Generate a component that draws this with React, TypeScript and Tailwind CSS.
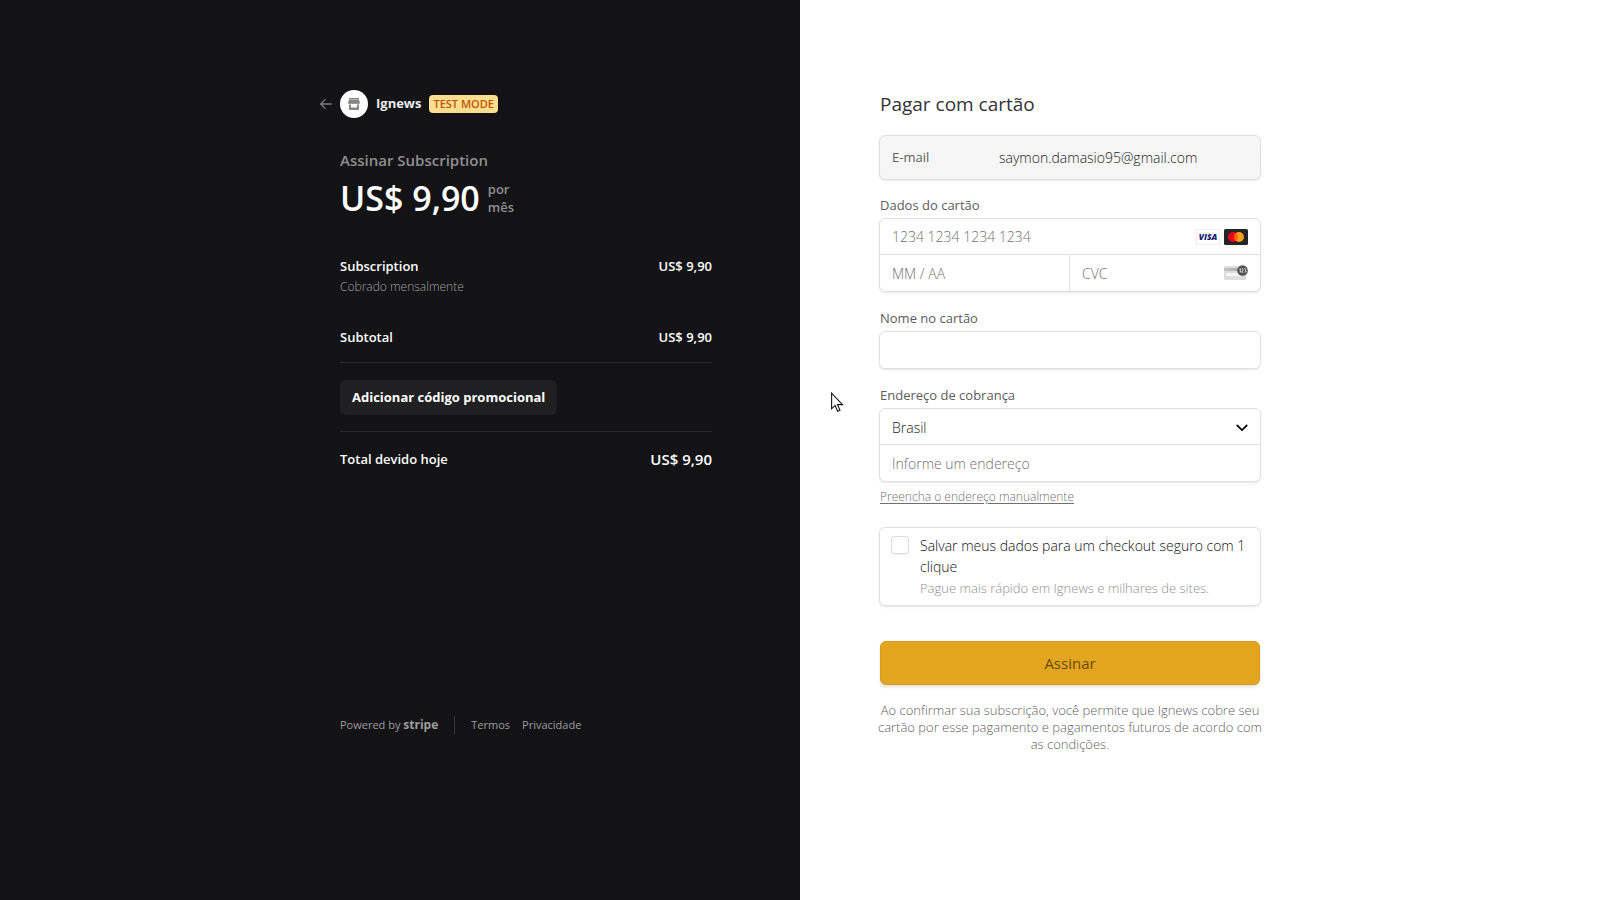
import type { ReactNode } from 'react';

const BOX = 'rounded-md border border-[#e0e0e0] bg-white shadow-[0_1px_1px_rgba(0,0,0,0.06),0_2px_4px_rgba(0,0,0,0.03)]';
const LABEL = 'block text-[13px] leading-5 text-[#5c5c5c]';
const FIELD =
  'h-full w-full min-w-0 rounded-md bg-transparent px-3 text-[14px] font-light text-[#1a1a1a] outline-none placeholder:text-[#707070] placeholder:opacity-100';

function BackArrow() {
  return (
    <svg width="12" height="12" viewBox="0 0 12 12" fill="none" stroke="#7d7d7e" strokeWidth="1.3" strokeLinecap="round" strokeLinejoin="round">
      <path d="M11.4 6H.8M5.2 1.4.7 6l4.5 4.6" />
    </svg>
  );
}

function StoreIcon() {
  return (
    <svg width="12" height="12" viewBox="0 0 12 12" fill="#868686">
      <path d="M1 0h10v1.6H1z" />
      <path d="M1 2h10l1 2.6c0 .9-.7 1.5-1.5 1.5S9 5.500 9 5.200c-.2.500-.8.900-1.500.900S6.200 5.700 6 5.200c-.2.500-.8.900-1.500.900S3.200 5.700 3 5.200c-.2.500-.7.900-1.500.900S0 5.500 0 4.600z" />
      <path d="M1 6.500h2v2.900h6V6.500h2V11a1 1 0 0 1-1 1H2a1 1 0 0 1-1-1z" />
    </svg>
  );
}

function VisaIcon() {
  return (
    <svg width="24" height="16" viewBox="0 0 24 16" role="img" aria-label="Visa">
      <rect x=".5" y=".5" width="23" height="15" fill="#fff" stroke="#ececec" />
      <text x="12" y="11.300" textAnchor="middle" fontFamily="Open Sans, sans-serif" fontSize="8.500" fontWeight="800" fontStyle="italic" fill="#1a1f71">
        VISA
      </text>
    </svg>
  );
}

function MastercardIcon() {
  return (
    <svg width="24" height="16" viewBox="0 0 24 16" role="img" aria-label="Mastercard">
      <rect width="24" height="16" rx="1.500" fill="#252525" />
      <circle cx="9" cy="8" r="5" fill="#eb001b" />
      <circle cx="15" cy="8" r="5" fill="#f79e1b" />
      <path d="M12 4a5 5 0 0 1 0 8 5 5 0 0 1 0-8" fill="#ff5f00" />
    </svg>
  );
}

function CvcIcon() {
  return (
    <svg width="24" height="16" viewBox="0 0 24 16" aria-hidden="true">
      <defs>
        <linearGradient id="stripe" x1="0" x2="1">
          <stop offset="0" stopColor="#c4c4c4" />
          <stop offset="1" stopColor="#a2a2a2" />
        </linearGradient>
      </defs>
      <rect y="1" width="22" height="14" rx="1.500" fill="#dedede" />
      <rect y="3" width="22" height="3" fill="url(#stripe)" />
      <rect x="2" y="8" width="18" height="3" fill="#f5f5f5" />
      <circle cx="18.500" cy="5.500" r="5.300" fill="#505050" />
      <path d="M15.500 4.200l.8-.6v4M17.600 3.900c1.200-.6 2 .3 1.300 1.300l-1.300 2h1.700M20.500 3.700c1.500-.4 1.900 1.200.6 1.700 1.600.3 1.200 2.200-.6 1.800" fill="none" stroke="#fff" strokeWidth=".8" />
    </svg>
  );
}

function Cursor() {
  return (
    <svg className="pointer-events-none absolute left-[31px] top-[392px]" width="13" height="21" viewBox="0 0 13 21" aria-hidden="true">
      <path d="M.6 1.200v15.600l3.500-3.400 2.500 5.900 2.400-1-2.500-5.700h5z" fill="#fff" stroke="#151515" strokeWidth="1.100" />
    </svg>
  );
}

function Row({ children, className = '' }: { children: ReactNode; className?: string }) {
  return <div className={`flex items-center justify-between text-[13px] leading-5 font-semibold ${className}`}>{children}</div>;
}

function Summary() {
  return (
    <section className="flex justify-end bg-[#131315] pr-[88px] text-white">
      <div className="flex w-full max-w-[372px] flex-col pt-[90px] pb-[165px]">
        <header className="-ml-5 flex h-7 items-center">
          <a href="#voltar" aria-label="Voltar" className="mr-2">
            <BackArrow />
          </a>
          <span className="flex size-7 items-center justify-center rounded-full bg-white">
            <StoreIcon />
          </span>
          <span className="ml-2 text-[13px] font-bold text-[#ececec]">Ignews</span>
          <span className="ml-2 rounded bg-[#ffde92] px-1 text-[11px] leading-[18px] font-semibold text-[#bb5504]">TEST MODE</span>
        </header>

        <h1 className="mt-[30px] text-[15px] leading-6 font-semibold text-[#8f8f90]">Assinar Subscription</h1>
        <div className="flex items-start gap-2">
          <span className="pt-0.5 text-[34px] leading-[48px] font-semibold">US$ 9,90</span>
          <span className="pt-2 text-[13px] leading-[18px] font-semibold text-[#8f8f90]">
            por
            <br />
            mês
          </span>
        </div>

        <Row className="mt-[34px]">
          <span>Subscription</span>
          <span>US$ 9,90</span>
        </Row>
        <p className="mt-px text-[12px] leading-5 font-light text-[#a0a0a1]">Cobrado mensalmente</p>

        <Row className="mt-[30px] border-b border-[#2b2b2d] pb-[15px]">
          <span>Subtotal</span>
          <span>US$ 9,90</span>
        </Row>
        <div className="border-b border-[#2b2b2d] pt-[17px] pb-4">
          <button type="button" className="block h-[35px] rounded-md bg-[#202022] px-3 text-[13px] font-bold">
            Adicionar código promocional
          </button>
        </div>
        <Row className="mt-[17px]">
          <span>Total devido hoje</span>
          <span className="text-[15px]">US$ 9,90</span>
        </Row>

        <footer className="mt-auto flex items-center text-[11px] leading-5 text-[#9c9c9d]">
          <a href="#stripe">
            Powered by <span className="text-[12px] font-bold">stripe</span>
          </a>
          <span className="mx-4 h-[18px] w-px bg-[#38383a]" />
          <a href="#termos">Termos</a>
          <a href="#privacidade" className="ml-3">
            Privacidade
          </a>
        </footer>
      </div>
    </section>
  );
}

function Payment() {
  return (
    <section className="relative bg-white pl-20">
      <form className="w-full max-w-[382px] -ml-px pt-[90px]">
        <h2 className="ml-px text-[19px] leading-7 font-medium text-[#333333]">Pagar com cartão</h2>

        <div className={`mt-[17px] flex h-[45px] items-center bg-[#f6f6f6]! ${BOX}`}>
          <label htmlFor="email" className="w-[107px] shrink-0 pl-3 text-[13px] text-[#606060]">
            E-mail
          </label>
          <input id="email" type="email" readOnly defaultValue="saymon.damasio95@gmail.com" className={FIELD} />
        </div>

        <div className="mt-[15px] ml-px">
          <label htmlFor="card" className={LABEL}>
            Dados do cartão
          </label>
        </div>
        <div className={`mt-[3px] ${BOX}`}>
          <div className="flex h-9 items-center border-b border-[#e0e0e0]">
            <input id="card" placeholder="1234 1234 1234 1234" className={FIELD} />
            <span className="flex shrink-0 gap-1 pr-3">
              <VisaIcon />
              <MastercardIcon />
            </span>
          </div>
          <div className="grid h-9 grid-cols-2">
            <input aria-label="Validade" placeholder="MM / AA" className={FIELD} />
            <div className="-ml-px flex h-full items-center border-l border-[#e0e0e0]">
              <input aria-label="CVC" placeholder="CVC" className={FIELD} />
              <span className="shrink-0 pr-3">
                <CvcIcon />
              </span>
            </div>
          </div>
        </div>

        <div className="mt-4 ml-px">
          <label htmlFor="name" className={LABEL}>
            Nome no cartão
          </label>
        </div>
        <div className={`mt-[3px] h-[38px] ${BOX}`}>
          <input id="name" className={FIELD} />
        </div>

        <div className="mt-4 ml-px">
          <label htmlFor="country" className={LABEL}>
            Endereço de cobrança
          </label>
        </div>
        <div className={`mt-[3px] ${BOX}`}>
          <div className="relative h-9 border-b border-[#e0e0e0]">
            <select id="country" className={`appearance-none pt-px ${FIELD}`}>
              <option>Brasil</option>
            </select>
            <svg className="pointer-events-none absolute top-[15px] right-3" width="12" height="8" viewBox="0 0 12 8" fill="none" stroke="#111" strokeWidth="1.800" strokeLinecap="round" strokeLinejoin="round">
              <path d="M1.300 1.500 6 6.200l4.700-4.700" />
            </svg>
          </div>
          <div className="h-9">
            <input aria-label="Endereço" placeholder="Informe um endereço" className={FIELD} />
          </div>
        </div>
        <a href="#manual" className="mt-[5px] ml-px block text-[12px] leading-5 font-light text-[#707070] underline underline-offset-2">
          Preencha o endereço manualmente
        </a>

        <label className={`mt-5 flex h-[79px] gap-[11px] pt-[7px] pl-[11px] ${BOX}`}>
          <input type="checkbox" className="mt-px size-[18px] shrink-0 appearance-none rounded-[3px] border border-[#dcdcdc] bg-white shadow-[0_1px_1px_rgba(0,0,0,0.06)]" />
          <span className="text-[14px] leading-[21px] font-light text-[#111111]">
            Salvar meus dados para um checkout seguro com 1 clique
            <span className="mt-px block text-[13px] text-[#8f8f8f]">Pague mais rápido em Ignews e milhares de sites.</span>
          </span>
        </label>

        <button type="button" className="mt-[35px] ml-px block h-11 w-[calc(100%-2px)] rounded-md border border-[#d59b1c] bg-[#e3a51e] text-[15px] font-medium text-[#674b0e] shadow-[0_2px_3px_rgba(0,0,0,0.12)]">
          Assinar
        </button>
        <p className="-mx-1 mt-[17px] text-center text-[13px] leading-[17px] font-light text-[#5f5f5f]">
          Ao confirmar sua subscrição, você permite que Ignews cobre seu cartão por esse pagamento e pagamentos futuros de acordo com as condições.
        </p>
      </form>
      <Cursor />
    </section>
  );
}

export default function App() {
  return (
    <main className="grid min-h-screen grid-cols-2 font-['Open_Sans','Noto_Sans',sans-serif]">
      <Summary />
      <Payment />
    </main>
  );
}
